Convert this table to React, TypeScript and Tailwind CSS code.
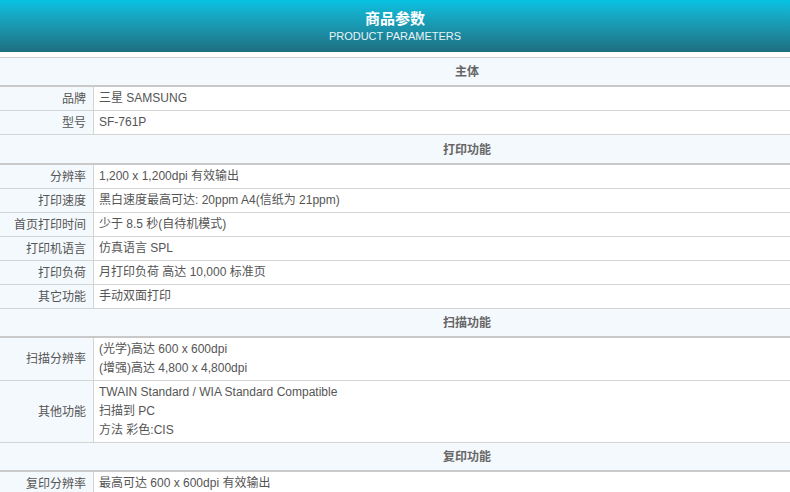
const font = { fontFamily: '"Liberation Sans", "Noto Sans CJK SC", sans-serif' };

type Row = { label: string; lines: string[] };
type Section = { title: string; rows: Row[] };

const sections: Section[] = [
  {
    title: '主体',
    rows: [
      { label: '品牌', lines: ['三星 SAMSUNG'] },
      { label: '型号', lines: ['SF-761P'] },
    ],
  },
  {
    title: '打印功能',
    rows: [
      { label: '分辨率', lines: ['1,200 x 1,200dpi 有效输出'] },
      { label: '打印速度', lines: ['黑白速度最高可达: 20ppm A4(信纸为 21ppm)'] },
      { label: '首页打印时间', lines: ['少于 8.5 秒(自待机模式)'] },
      { label: '打印机语言', lines: ['仿真语言 SPL'] },
      { label: '打印负荷', lines: ['月打印负荷 高达 10,000 标准页'] },
      { label: '其它功能', lines: ['手动双面打印'] },
    ],
  },
  {
    title: '扫描功能',
    rows: [
      { label: '扫描分辨率', lines: ['(光学)高达 600 x 600dpi', '(增强)高达 4,800 x 4,800dpi'] },
      {
        label: '其他功能',
        lines: ['TWAIN Standard / WIA Standard Compatible', '扫描到 PC', '方法 彩色:CIS'],
      },
    ],
  },
  {
    title: '复印功能',
    rows: [{ label: '复印分辨率', lines: ['最高可达 600 x 600dpi 有效输出'] }],
  },
];

export default function App() {
  return (
    <div className="w-[790px] h-[492px] overflow-hidden bg-white text-[12px] text-[#555]" style={font}>
      <div className="h-[52px] flex flex-col items-center bg-gradient-to-b from-[#06c2e2] to-[#1d6f80] text-white">
        <div className="mt-[9px] text-[15px] font-bold leading-[20px]">商品参数</div>
        <div className="text-[11px] leading-[14px] text-[#e6f4f7]">PRODUCT PARAMETERS</div>
      </div>
      <div className="mt-[5px] w-[934px] border-t border-[#cfcfcf]">
        {sections.map((s, i) => (
          <div key={s.title}>
            <div
              className={
                i === 1
                  ? 'h-[30px] pt-px flex items-center justify-center bg-[#f4f9fd] border-b-2 border-[#c9c9c9] font-bold text-[#666]'
                  : 'h-[29px] pt-px flex items-center justify-center bg-[#f4f9fd] border-b-2 border-[#c9c9c9] font-bold text-[#666]'
              }
            >
              {s.title}
            </div>
            {s.rows.map((r) => (
              <div key={r.label} className="flex border-b border-[#d4d4d4]">
                <div className="w-[94px] shrink-0 flex items-center justify-end pr-[7px] bg-[#f4f9fd] border-r border-[#d4d4d4]">
                  {r.label}
                </div>
                <div className="flex-1 py-[2px] pl-[5px] leading-[19px]">
                  {r.lines.map((l) => (
                    <div key={l}>{l}</div>
                  ))}
                </div>
              </div>
            ))}
          </div>
        ))}
      </div>
    </div>
  );
}
